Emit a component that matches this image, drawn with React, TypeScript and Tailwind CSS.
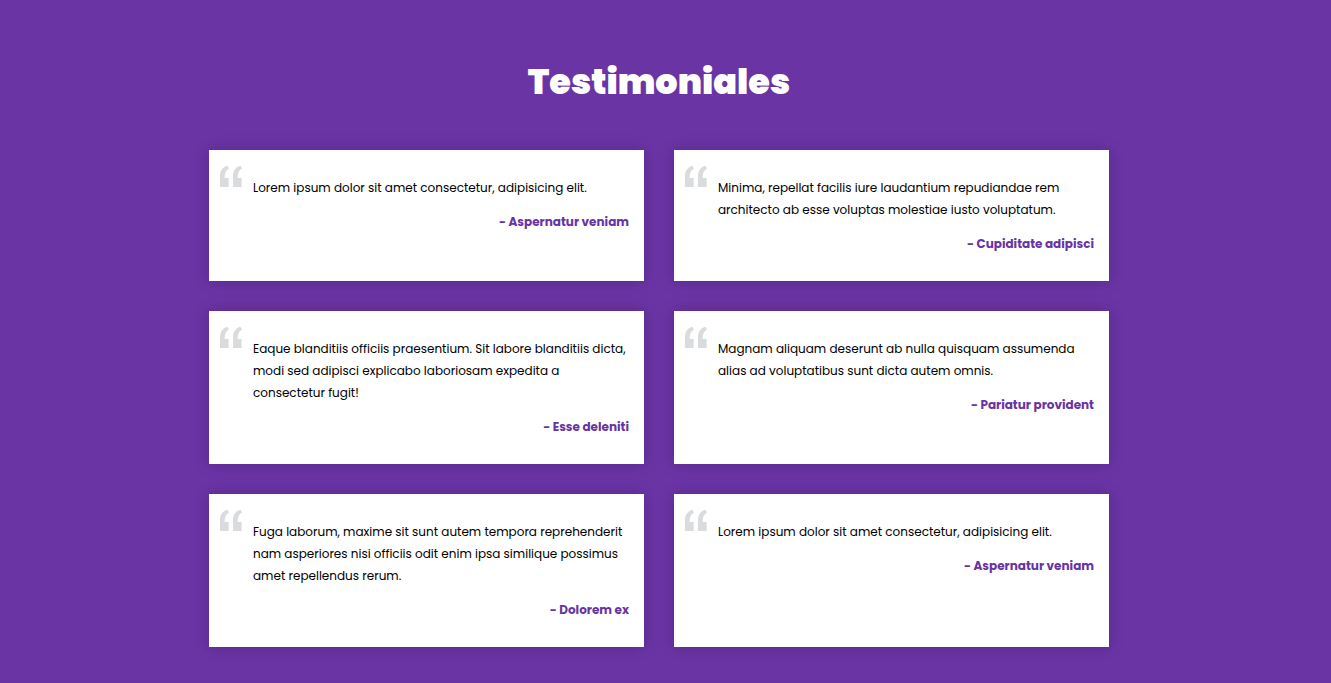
const testimonials = [
  { quote: "Lorem ipsum dolor sit amet consectetur, adipisicing elit.", author: "Aspernatur veniam" },
  { quote: "Minima, repellat facilis iure laudantium repudiandae rem architecto ab esse voluptas molestiae iusto voluptatum.", author: "Cupiditate adipisci" },
  { quote: "Eaque blanditiis officiis praesentium. Sit labore blanditiis dicta, modi sed adipisci explicabo laboriosam expedita a consectetur fugit!", author: "Esse deleniti" },
  { quote: "Magnam aliquam deserunt ab nulla quisquam assumenda alias ad voluptatibus sunt dicta autem omnis.", author: "Pariatur provident" },
  { quote: "Fuga laborum, maxime sit sunt autem tempora reprehenderit nam asperiores nisi officiis odit enim ipsa similique possimus amet repellendus rerum.", author: "Dolorem ex" },
  { quote: "Lorem ipsum dolor sit amet consectetur, adipisicing elit.", author: "Aspernatur veniam" },
];

function QuoteMark() {
  return (
    <svg viewBox="0 0 22 21" className="-mt-[11px] h-[21px] w-[22px] shrink-0 fill-[#dadbdc]" aria-hidden="true">
      <path d="M0 21V10.5C0 5.2 2.2 1.6 6.4 0H7.6L9 2.6C6 4.2 4.6 7.2 4.6 12H8.6V21Z" />
      <path d="M13 21V10.5C13 5.2 15.2 1.6 19.4 0H20.6L22 2.6C19 4.2 17.6 7.2 17.6 12H21.6V21Z" />
    </svg>
  );
}

function Card({ quote, author }: { quote: string; author: string }) {
  return (
    <figure className="flex gap-[11px] bg-white pt-[27px] pr-[15px] pb-[26px] pl-[11px] text-[12px] leading-[22px] shadow-[0_0_15px_rgba(0,0,0,0.2)]">
      <QuoteMark />
      <div className="min-w-0 flex-1">
        <blockquote className="text-black">{quote}</blockquote>
        <figcaption className="mt-3 text-right font-bold text-[#6833a3]">- {author}</figcaption>
      </div>
    </figure>
  );
}

export default function App() {
  return (
    <section className="min-h-screen bg-[#6a34a5] pt-[60px] pr-[13px] pb-9 font-[Poppins,Inter,sans-serif]">
      <div className="mx-auto max-w-[900px]">
        <h1 className="mb-[46px] text-center text-[35px] leading-[44px] font-black text-white">Testimoniales</h1>
        <div className="grid grid-cols-1 gap-[30px] md:grid-cols-2">
          {testimonials.map((item, index) => (
            <Card key={index} quote={item.quote} author={item.author} />
          ))}
        </div>
      </div>
    </section>
  );
}
